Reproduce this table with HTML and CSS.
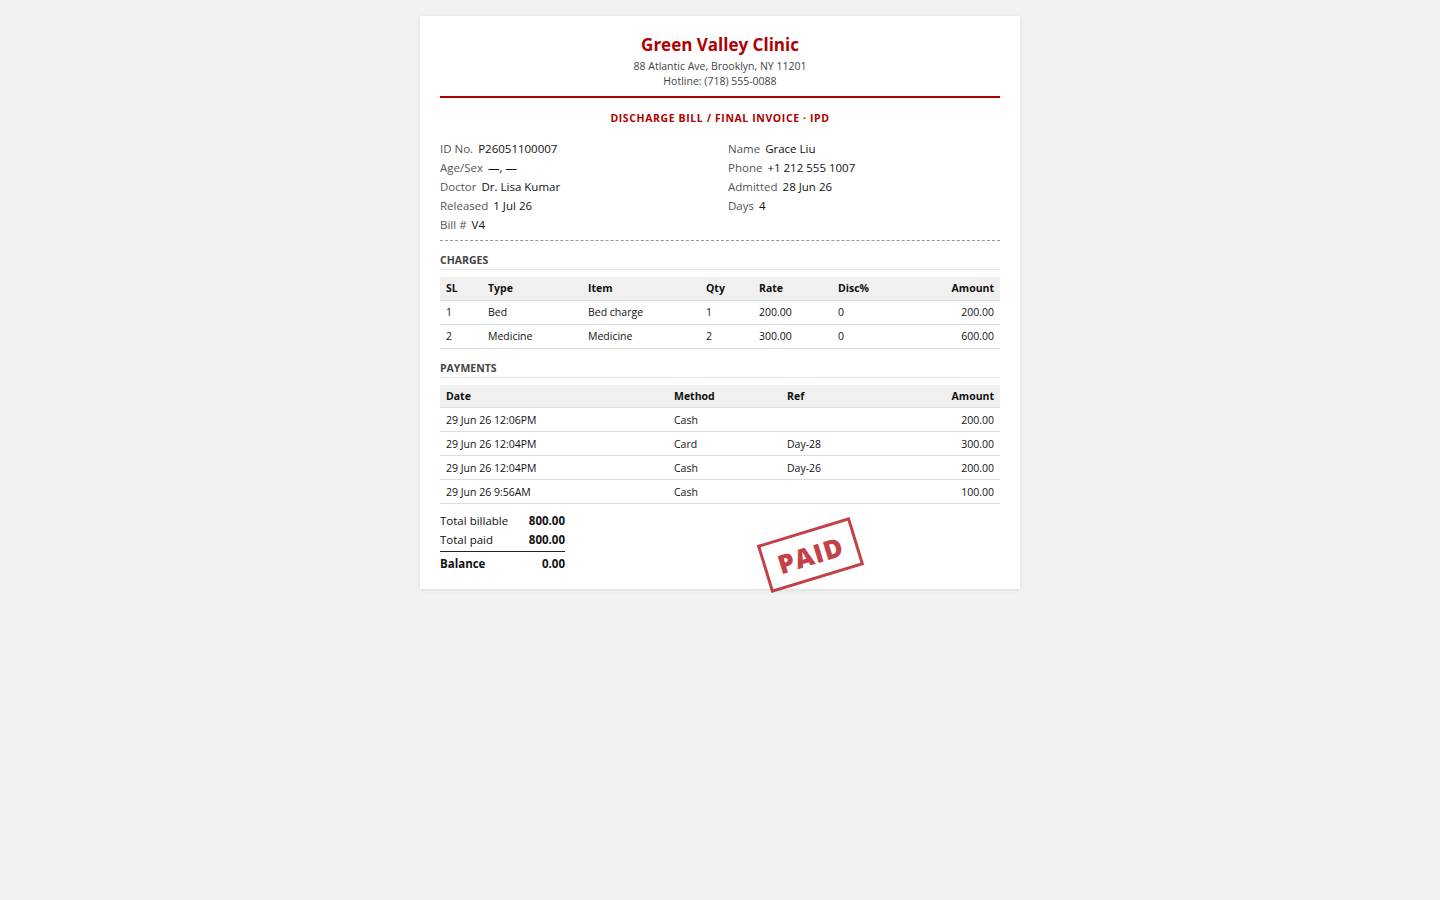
FILE: index.html
```html
<!DOCTYPE html>
<html>
<head>
<meta charset="utf-8">
<title>Discharge Bill</title>
<link rel="stylesheet" href="styles.css">
</head>
<body>
<div class="sheet">
  <header class="head">
    <h1 class="clinic">Green Valley Clinic</h1>
    <div class="addr">88 Atlantic Ave, Brooklyn, NY 11201</div>
    <div class="addr">Hotline: (718) 555-0088</div>
  </header>
  <div class="doc-title">DISCHARGE BILL / FINAL INVOICE · IPD</div>

  <div class="info">
    <div class="col">
      <div class="row"><span class="lbl">ID No.</span><span class="val">P26051100007</span></div>
      <div class="row"><span class="lbl">Age/Sex</span><span class="val">—, —</span></div>
      <div class="row"><span class="lbl">Doctor</span><span class="val">Dr. Lisa Kumar</span></div>
      <div class="row"><span class="lbl">Released</span><span class="val">1 Jul 26</span></div>
      <div class="row"><span class="lbl">Bill #</span><span class="val">V4</span></div>
    </div>
    <div class="col">
      <div class="row"><span class="lbl">Name</span><span class="val">Grace Liu</span></div>
      <div class="row"><span class="lbl">Phone</span><span class="val">+1 212 555 1007</span></div>
      <div class="row"><span class="lbl">Admitted</span><span class="val">28 Jun 26</span></div>
      <div class="row"><span class="lbl">Days</span><span class="val">4</span></div>
    </div>
  </div>

  <div class="section-title">CHARGES</div>
  <table class="grid">
    <colgroup>
      <col class="c-sl"><col class="c-type"><col class="c-item"><col class="c-qty"><col class="c-rate"><col class="c-disc"><col>
    </colgroup>
    <thead>
      <tr><th>SL</th><th>Type</th><th>Item</th><th>Qty</th><th>Rate</th><th>Disc%</th><th class="r">Amount</th></tr>
    </thead>
    <tbody>
      <tr><td>1</td><td>Bed</td><td>Bed charge</td><td>1</td><td>200.00</td><td>0</td><td class="r">200.00</td></tr>
      <tr><td>2</td><td>Medicine</td><td>Medicine</td><td>2</td><td>300.00</td><td>0</td><td class="r">600.00</td></tr>
    </tbody>
  </table>

  <div class="section-title">PAYMENTS</div>
  <table class="grid">
    <colgroup>
      <col class="p-date"><col class="p-method"><col class="p-ref"><col>
    </colgroup>
    <thead>
      <tr><th>Date</th><th>Method</th><th>Ref</th><th class="r">Amount</th></tr>
    </thead>
    <tbody>
      <tr><td>29 Jun 26 12:06PM</td><td>Cash</td><td></td><td class="r">200.00</td></tr>
      <tr><td>29 Jun 26 12:04PM</td><td>Card</td><td>Day-28</td><td class="r">300.00</td></tr>
      <tr><td>29 Jun 26 12:04PM</td><td>Cash</td><td>Day-26</td><td class="r">200.00</td></tr>
      <tr><td>29 Jun 26 9:56AM</td><td>Cash</td><td></td><td class="r">100.00</td></tr>
    </tbody>
  </table>

  <div class="footer">
    <div class="totals">
      <div class="t-row"><span>Total billable</span><b>800.00</b></div>
      <div class="t-row"><span>Total paid</span><b>800.00</b></div>
      <div class="t-row bal"><b>Balance</b><b>0.00</b></div>
    </div>
  </div>
  <div class="stamp">PAID</div>
</div>
</body>
</html>
```
FILE: styles.css
```css
* { box-sizing: border-box; }
html, body { margin: 0; padding: 0; }
body {
  background: #f2f2f2;
  font-family: "Segoe UI", "Open Sans", "Noto Sans", sans-serif;
  color: #111;
  padding: 16px 0 40px;
}
.sheet {
  position: relative;
  width: 600px;
  margin: 0 auto;
  background: #fff;
  box-shadow: 0 1px 4px rgba(0,0,0,0.10);
  padding: 16px 20px 16px;
}
.head {
  text-align: center;
  border-bottom: 2px solid #b00000;
  padding-bottom: 7px;
}
.clinic {
  margin: 0 0 1px;
  font-size: 17px;
  line-height: 26px;
  font-weight: 700;
  color: #b00000;
}
.addr {
  font-size: 10.5px;
  line-height: 15px;
  color: #444;
}
.doc-title {
  text-align: center;
  font-size: 10.5px;
  font-weight: 700;
  color: #b00000;
  letter-spacing: 0.6px;
  line-height: 16px;
  margin-top: 12px;
}
.info {
  display: grid;
  grid-template-columns: 1fr 1fr;
  column-gap: 16px;
  margin-top: 13px;
  padding-bottom: 6px;
  border-bottom: 1px dashed #999;
}
.row {
  font-size: 11.5px;
  line-height: 19px;
  white-space: nowrap;
}
.lbl { color: #555; margin-right: 5px; }
.val { color: #111; }
.section-title {
  font-size: 10.5px;
  font-weight: 700;
  color: #444;
  line-height: 16px;
  margin-top: 11px;
  padding-bottom: 1px;
  border-bottom: 1px solid #e6e6e6;
}
.grid + .section-title { margin-top: 11px; }
.grid {
  width: 100%;
  border-collapse: collapse;
  margin-top: 7px;
  font-size: 10.5px;
  table-layout: fixed;
}
.grid th {
  background: #f0f0f0;
  font-weight: 700;
  text-align: left;
  height: 23px;
  padding: 0 6px;
  border-bottom: 1px solid #ddd;
}
.grid td {
  height: 24px;
  padding: 0 6px;
  border-bottom: 1px solid #ddd;
}
.grid .r { text-align: right; }
.c-sl { width: 42px; }
.c-type { width: 100px; }
.c-item { width: 118px; }
.c-qty { width: 53px; }
.c-rate { width: 79px; }
.c-disc { width: 79px; }
.p-date { width: 228px; }
.p-method { width: 113px; }
.p-ref { width: 100px; }
.footer {
  margin-top: 7px;
}
.totals {
  width: 125px;
  font-size: 11.5px;
}
.t-row {
  display: flex;
  justify-content: space-between;
  line-height: 19px;
}
.t-row.bal {
  border-top: 1px solid #222;
  margin-top: 2px;
  padding-top: 2px;
}
.stamp {
  position: absolute;
  left: 342px;
  bottom: 9px;
  width: 97px;
  height: 50px;
  border: 3px solid #c0313a;
  color: #c0313a;
  font-size: 26px;
  font-weight: 800;
  letter-spacing: 1px;
  display: flex;
  align-items: center;
  justify-content: center;
  transform: rotate(-17deg);
  opacity: 0.92;
}
```
